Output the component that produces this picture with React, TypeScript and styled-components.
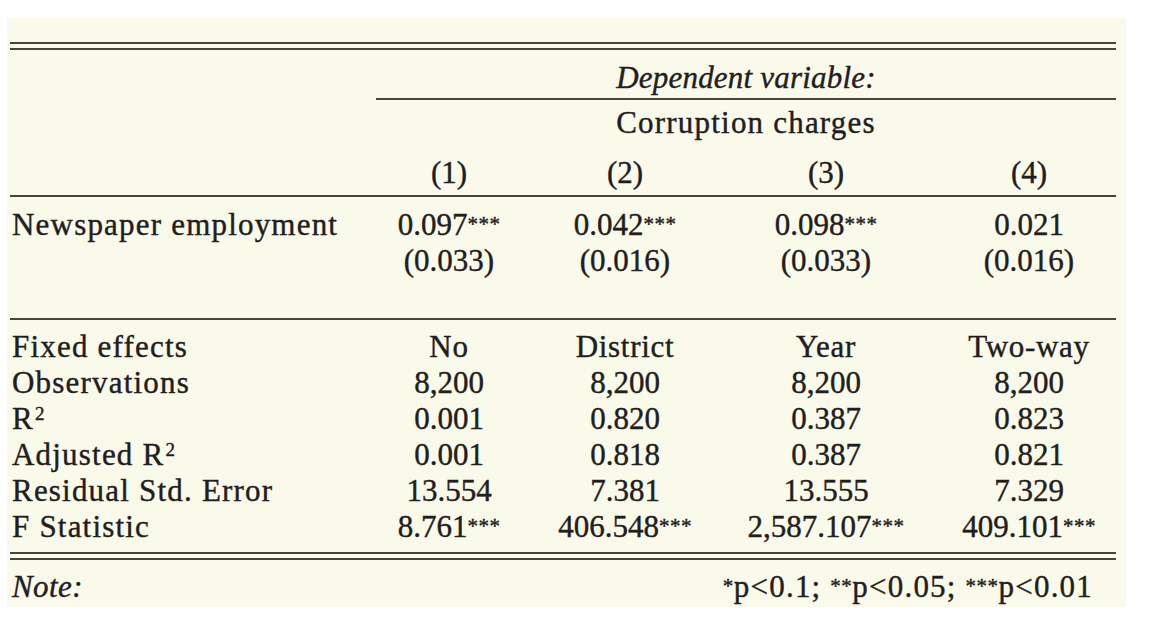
import React from 'react'
import styled, { createGlobalStyle } from 'styled-components'

const GlobalStyle = createGlobalStyle`
  html, body {
    margin: 0;
    padding: 0;
    background: #ffffff;
  }
  body {
    font-family: "Liberation Serif", "Times New Roman", serif;
    color: #1f201d;
  }
`

const COLUMNS = '348px 182px 170px 232px 174px'
const RULE = '#45463b'

const Page = styled.div`
  padding: 18px 0 0 7px;
`

const Panel = styled.div`
  width: 1119px;
  height: 589px;
  box-sizing: border-box;
  background: #fafaea;
  padding: 24px 0 0 3px;
`

const Table = styled.div`
  width: 1106px;
  font-size: 31px;
  line-height: 36px;
  -webkit-text-stroke: 0.4px currentColor;
`

const DoubleRule = styled.div<{ $top?: number }>`
  margin-top: ${p => p.$top ?? 0}px;
  height: 4px;
  border-top: 2px solid ${RULE};
  border-bottom: 2px solid ${RULE};
`

const Rule = styled.div<{ $top: number }>`
  margin-top: ${p => p.$top}px;
  height: 2px;
  background: ${RULE};
`

const Row = styled.div<{ $top?: number; $height?: number }>`
  display: grid;
  grid-template-columns: ${COLUMNS};
  margin-top: ${p => p.$top ?? 0}px;
  height: ${p => p.$height ?? 36}px;
`

const Label = styled.div`
  padding-left: 2px;
  letter-spacing: 1.2px;
  white-space: nowrap;
`

const Cell = styled.div<{ $word?: boolean }>`
  text-align: center;
  white-space: nowrap;
  letter-spacing: ${p => (p.$word ? '0.7px' : '0')};
`

const Spanner = styled.div<{ $italic?: boolean; $underline?: boolean }>`
  grid-column: 2 / -1;
  margin-left: 18px;
  text-align: center;
  font-style: ${p => (p.$italic ? 'italic' : 'normal')};
  letter-spacing: ${p => (p.$italic ? '0.2px' : '1.2px')};
  ${p => p.$underline && `
    height: 38px;
    border-bottom: 2px solid ${RULE};
  `}
`

const Stars = styled.span`
  font-size: 21px;
  line-height: 0;
  vertical-align: 4px;
  letter-spacing: 0.5px;
`

const Sup = styled.span`
  font-size: 19px;
  line-height: 0;
  vertical-align: 9px;
  margin-left: 1px;
`

const NoteRow = styled.div`
  display: flex;
  justify-content: space-between;
  margin-top: 9px;
  height: 36px;
`

const NoteLabel = styled.div`
  padding-left: 2px;
  font-style: italic;
  letter-spacing: 0.4px;
`

const NoteText = styled.div`
  padding-right: 23px;
  letter-spacing: 1.2px;
`

type Value = { v: string; stars?: string; word?: boolean }

const coef: Value[] = [
  { v: '0.097', stars: '***' },
  { v: '0.042', stars: '***' },
  { v: '0.098', stars: '***' },
  { v: '0.021' },
]
const se: Value[] = [{ v: '(0.033)' }, { v: '(0.016)' }, { v: '(0.033)' }, { v: '(0.016)' }]

const stats: { label: React.ReactNode; values: Value[] }[] = [
  {
    label: 'Fixed effects',
    values: [
      { v: 'No', word: true },
      { v: 'District', word: true },
      { v: 'Year', word: true },
      { v: 'Two-way', word: true },
    ],
  },
  { label: 'Observations', values: [{ v: '8,200' }, { v: '8,200' }, { v: '8,200' }, { v: '8,200' }] },
  { label: <>R<Sup>2</Sup></>, values: [{ v: '0.001' }, { v: '0.820' }, { v: '0.387' }, { v: '0.823' }] },
  {
    label: <>Adjusted R<Sup>2</Sup></>,
    values: [{ v: '0.001' }, { v: '0.818' }, { v: '0.387' }, { v: '0.821' }],
  },
  {
    label: 'Residual Std. Error',
    values: [{ v: '13.554' }, { v: '7.381' }, { v: '13.555' }, { v: '7.329' }],
  },
  {
    label: 'F Statistic',
    values: [
      { v: '8.761', stars: '***' },
      { v: '406.548', stars: '***' },
      { v: '2,587.107', stars: '***' },
      { v: '409.101', stars: '***' },
    ],
  },
]

const Values: React.FC<{ values: Value[] }> = ({ values }) => (
  <>
    {values.map((val, i) => (
      <Cell key={i} $word={val.word}>
        {val.v}
        {val.stars && <Stars>{val.stars}</Stars>}
      </Cell>
    ))}
  </>
)

const App: React.FC = () => {
  return (
    <Page>
      <GlobalStyle />
      <Panel>
        <Table>
          <DoubleRule />

          <Row $top={10} $height={40}>
            <Spanner $italic $underline>Dependent variable:</Spanner>
          </Row>
          <Row $top={5}>
            <Spanner>Corruption charges</Spanner>
          </Row>
          <Row $top={14}>
            <div />
            <Cell>(1)</Cell>
            <Cell>(2)</Cell>
            <Cell>(3)</Cell>
            <Cell>(4)</Cell>
          </Row>
          <Rule $top={4} />

          <Row $top={10}>
            <Label>Newspaper employment</Label>
            <Values values={coef} />
          </Row>
          <Row>
            <div />
            <Values values={se} />
          </Row>
          <Rule $top={39} />

          <Row $top={9}>
            <Label>{stats[0].label}</Label>
            <Values values={stats[0].values} />
          </Row>
          {stats.slice(1).map((s, i) => (
            <Row key={i}>
              <Label>{s.label}</Label>
              <Values values={s.values} />
            </Row>
          ))}
          <DoubleRule $top={7} />

          <NoteRow>
            <NoteLabel>Note:</NoteLabel>
            <NoteText>
              <Stars>*</Stars>p&lt;0.1; <Stars>**</Stars>p&lt;0.05; <Stars>***</Stars>p&lt;0.01
            </NoteText>
          </NoteRow>
        </Table>
      </Panel>
    </Page>
  )
}

export default App
